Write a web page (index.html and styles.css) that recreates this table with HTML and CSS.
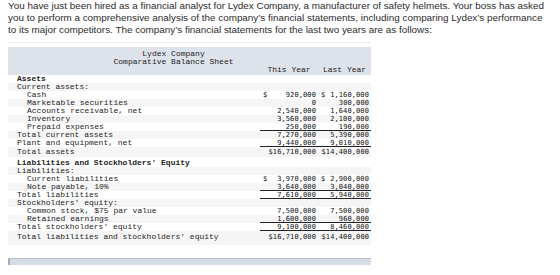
FILE: index.html
```html
<!DOCTYPE html>
<html>
<head>
<meta charset="utf-8">
<link rel="stylesheet" href="styles.css">
</head>
<body>
<p class="intro">You have just been hired as a financial analyst for Lydex Company, a manufacturer of safety helmets. Your boss has asked<br>you to perform a comprehensive analysis of the company’s financial statements, including comparing Lydex’s performance<br>to its major competitors. The company’s financial statements for the last two years are as follows:</p>
<div class="rule"></div>
<div class="sheet">
<table class="bs">
  <colgroup><col class="c-label"><col class="c-num"><col class="c-num2"></colgroup>
  <thead>
    <tr class="title"><th colspan="3"><div class="tl">Lydex Company</div><div class="tl">Comparative Balance Sheet</div></th></tr>
    <tr class="heads"><th></th><th class="ch">This Year</th><th class="ch">Last Year</th></tr>
  </thead>
  <tbody>
    <tr class="w"><td class="lbl b">Assets</td><td></td><td></td></tr>
    <tr class="g"><td class="lbl">Current assets:</td><td></td><td></td></tr>
    <tr class="w"><td class="lbl in">Cash</td><td class="n"><div class="v"><span>$</span><span>920,000</span></div></td><td class="n"><div class="v"><span>$</span><span>1,160,000</span></div></td></tr>
    <tr class="g"><td class="lbl in">Marketable securities</td><td class="n"><div class="v"><span></span><span>0</span></div></td><td class="n"><div class="v"><span></span><span>300,000</span></div></td></tr>
    <tr class="w"><td class="lbl in">Accounts receivable, net</td><td class="n"><div class="v"><span></span><span>2,540,000</span></div></td><td class="n"><div class="v"><span></span><span>1,640,000</span></div></td></tr>
    <tr class="g"><td class="lbl in">Inventory</td><td class="n"><div class="v"><span></span><span>3,560,000</span></div></td><td class="n"><div class="v"><span></span><span>2,100,000</span></div></td></tr>
    <tr class="w"><td class="lbl in">Prepaid expenses</td><td class="n ul"><div class="v"><span></span><span>250,000</span></div></td><td class="n ul"><div class="v"><span></span><span>190,000</span></div></td></tr>
    <tr class="g"><td class="lbl">Total current assets</td><td class="n"><div class="v"><span></span><span>7,270,000</span></div></td><td class="n"><div class="v"><span></span><span>5,390,000</span></div></td></tr>
    <tr class="w"><td class="lbl">Plant and equipment, net</td><td class="n ul"><div class="v"><span></span><span>9,440,000</span></div></td><td class="n ul"><div class="v"><span></span><span>9,010,000</span></div></td></tr>
    <tr class="g t1"><td class="lbl">Total assets</td><td class="n dbl"><div class="v"><span></span><span>$16,710,000</span></div></td><td class="n dbl"><div class="v"><span></span><span>$14,400,000</span></div></td></tr>
    <tr class="w t2"><td class="lbl b">Liabilities and Stockholders' Equity</td><td></td><td></td></tr>
    <tr class="g"><td class="lbl">Liabilities:</td><td></td><td></td></tr>
    <tr class="w"><td class="lbl in">Current liabilities</td><td class="n"><div class="v"><span>$</span><span>3,970,000</span></div></td><td class="n"><div class="v"><span>$</span><span>2,900,000</span></div></td></tr>
    <tr class="g"><td class="lbl in">Note payable, 10%</td><td class="n ul"><div class="v"><span></span><span>3,640,000</span></div></td><td class="n ul"><div class="v"><span></span><span>3,040,000</span></div></td></tr>
    <tr class="w"><td class="lbl">Total liabilities</td><td class="n ul"><div class="v"><span></span><span>7,610,000</span></div></td><td class="n ul"><div class="v"><span></span><span>5,940,000</span></div></td></tr>
    <tr class="g"><td class="lbl">Stockholders' equity:</td><td></td><td></td></tr>
    <tr class="w"><td class="lbl in">Common stock, $75 par value</td><td class="n"><div class="v"><span></span><span>7,500,000</span></div></td><td class="n"><div class="v"><span></span><span>7,500,000</span></div></td></tr>
    <tr class="g"><td class="lbl in">Retained earnings</td><td class="n ul"><div class="v"><span></span><span>1,600,000</span></div></td><td class="n ul"><div class="v"><span></span><span>960,000</span></div></td></tr>
    <tr class="w"><td class="lbl">Total stockholders' equity</td><td class="n ul"><div class="v"><span></span><span>9,100,000</span></div></td><td class="n ul"><div class="v"><span></span><span>8,460,000</span></div></td></tr>
    <tr class="g t3"><td class="lbl">Total liabilities and stockholders' equity</td><td class="n dbl"><div class="v"><span></span><span>$16,710,000</span></div></td><td class="n dbl"><div class="v"><span></span><span>$14,400,000</span></div></td></tr>
  </tbody>
</table>
<div class="scrollbar"><div class="thumb"></div></div>
</div>
</body>
</html>
```
FILE: styles.css
```css
body {
  margin: 0;
  padding: 0 8px;
  background: #fff;
  color: #222;
}
.intro {
  margin: 0;
  font-family: "Liberation Sans", Arial, sans-serif;
  font-size: 9.9px;
  line-height: 11.8px;
  color: #2b2b2b;
}
.rule {
  width: 363px;
  height: 1px;
  background: #ececec;
  margin-top: 7px;
}
.sheet {
  width: 363px;
  margin-top: 4px;
}
.bs {
  width: 363px;
  table-layout: fixed;
  border-collapse: collapse;
  font-family: "Liberation Mono", "Courier New", monospace;
  font-size: 8px;
  line-height: 8px;
  color: #1e1e1e;
}
.c-label { width: 252px; }
.c-num { width: 58px; }
.c-num2 { width: 53px; }
.title th {
  background: #dee2ea;
  font-weight: normal;
  text-align: center;
  padding: 3px 32px 0 0;
}
.tl { height: 8px; line-height: 8px; }
.heads th {
  background: #dee2ea;
  font-weight: normal;
  padding: 0 0 1px;
  height: 8px;
  line-height: 8px;
  white-space: nowrap;
}
.heads .ch { text-align: center; }
.bs td { padding: 0; height: 8px; white-space: nowrap; }
.w td { background: #fff; }
.g td { background: #f5f5f5; }
.lbl { padding-left: 9px !important; }
.lbl.in { padding-left: 19px !important; }
.lbl.b { font-weight: bold; }
.t1 td { height: 9px; vertical-align: top; padding-top: 1px; }
.t2 td { height: 10px; vertical-align: bottom; }
.t3 td { height: 12px; vertical-align: top; padding-top: 2px; }
.n {
  font-family: "DejaVu Sans Mono", monospace;
  font-size: 7px;
  letter-spacing: 0.1px;
  color: #111;
}
.v {
  display: flex;
  justify-content: space-between;
  padding: 0 2px 0 3px;
  white-space: nowrap;
}
.ul { box-shadow: inset 0 -1px 0 #222; }
.dbl {
  background-image: linear-gradient(to top, #5a5a5a 0 1px, transparent 1px 2px, #5a5a5a 2px 3px, transparent 3px);
}
.scrollbar {
  margin-top: 13px;
  height: 6px;
  background: #d7dde7;
  border-top: 1px solid #b9bec6;
}
.thumb {
  width: 2px;
  height: 6px;
  background: #a7adb6;
}
```
